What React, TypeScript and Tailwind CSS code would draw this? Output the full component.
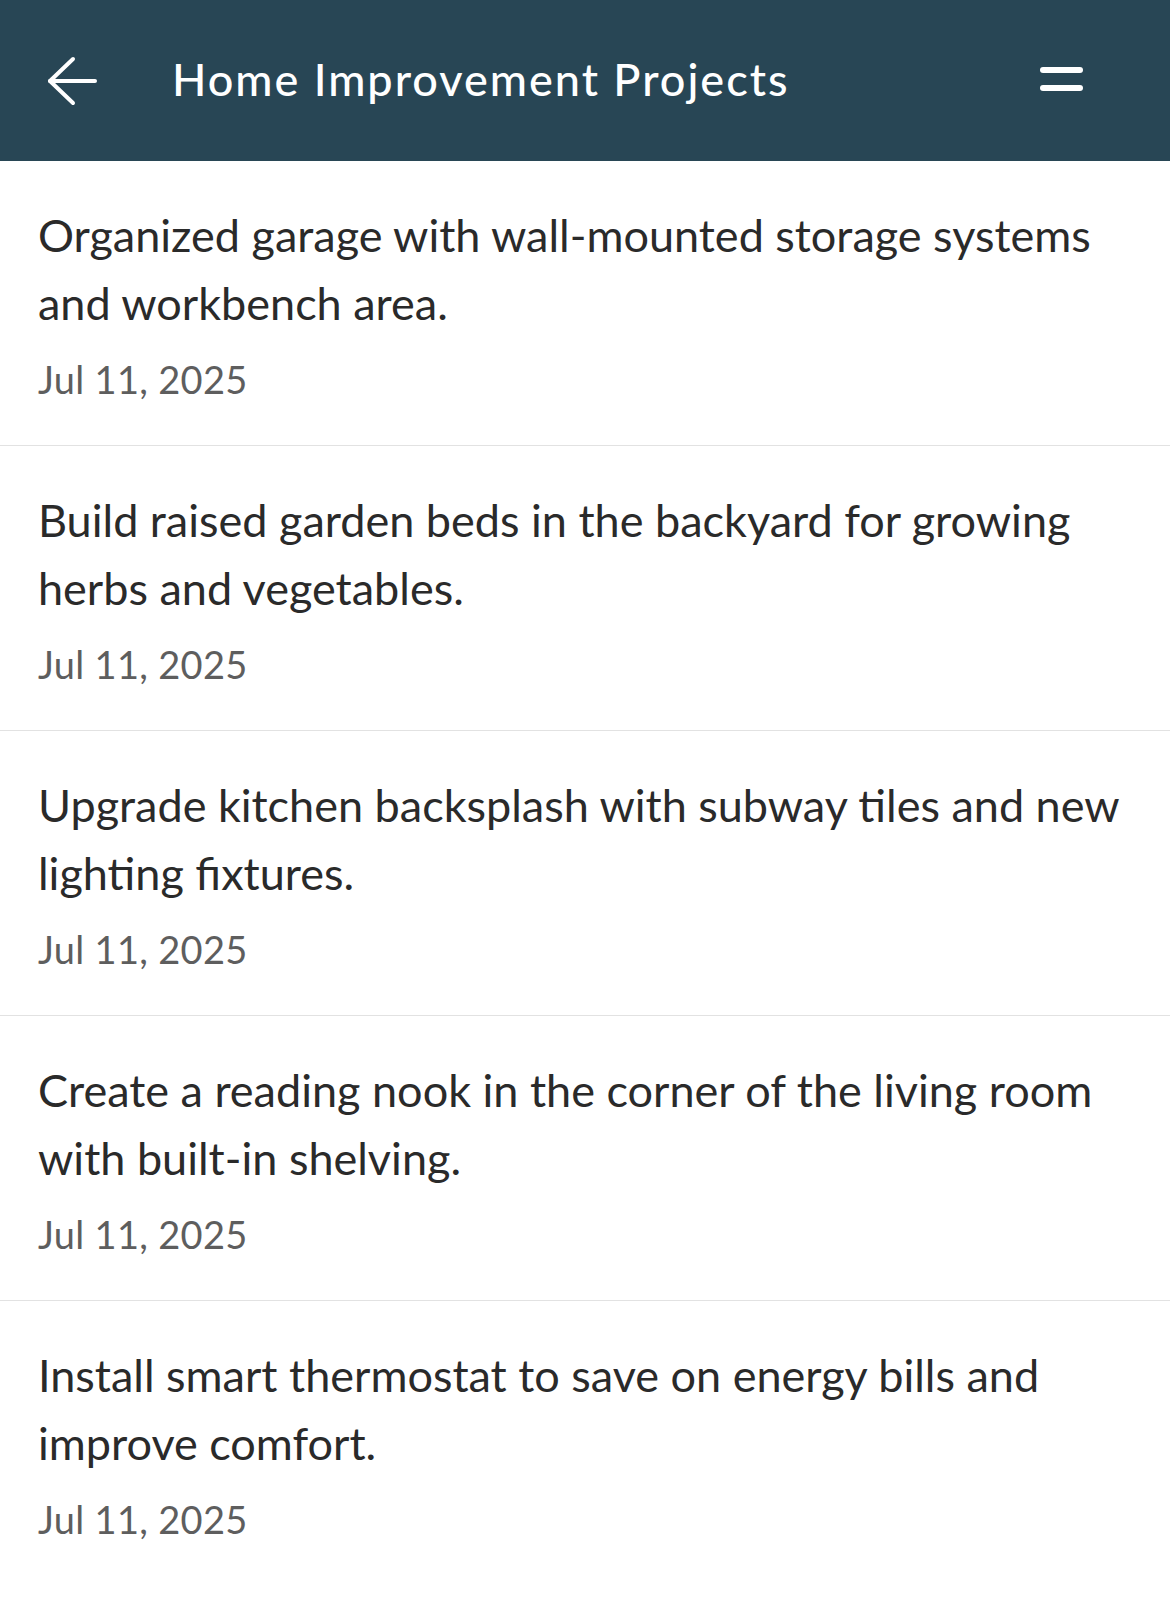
const PROJECTS = [
  { id: 1, text: "Organized garage with wall-mounted storage systems and workbench area.", date: "Jul 11, 2025" },
  { id: 2, text: "Build raised garden beds in the backyard for growing herbs and vegetables.", date: "Jul 11, 2025" },
  { id: 3, text: "Upgrade kitchen backsplash with subway tiles and new lighting fixtures.", date: "Jul 11, 2025" },
  { id: 4, text: "Create a reading nook in the corner of the living room with built-in shelving.", date: "Jul 11, 2025" },
  { id: 5, text: "Install smart thermostat to save on energy bills and improve comfort.", date: "Jul 11, 2025" },
];

function BackArrow() {
  return (
    <svg width="50" height="50" viewBox="0 0 50 50" fill="none" stroke="white" strokeWidth="4" strokeLinecap="round" strokeLinejoin="round">
      <path d="M3 25H48" />
      <path d="M26 3L3 25L26 47" />
    </svg>
  );
}

export default function App() {
  return (
    <div className="min-h-[1600px] bg-white font-['Lato',sans-serif]">
      {/* Header */}
      <header className="h-[161px] bg-[#284655] flex items-center pl-[47px] pr-[87px]">
        <button className="shrink-0 flex items-center">
          <BackArrow />
        </button>
        <h1 className="ml-[75px] flex-1 text-white text-[45px] font-medium tracking-[2px] leading-none -mt-[2px]">
          Home Improvement Projects
        </h1>
        <button className="flex flex-col gap-[12px] w-[43px] -mt-[4px]">
          <span className="block h-[6px] w-full rounded-full bg-white" />
          <span className="block h-[6px] w-full rounded-full bg-white" />
        </button>
      </header>

      {/* List */}
      <ul>
        {PROJECTS.map(p => (
          <li key={p.id} className="border-b border-[#e2e2e2] last:border-b-0 px-[38px] pt-[40px] pb-[42px]">
            <p className="text-[45px] leading-[68px] text-[#2a2a2a]">{p.text}</p>
            <p className="mt-[18px] text-[38px] leading-[48px] text-[#5e5e5e] tracking-[0.3px]">{p.date}</p>
          </li>
        ))}
      </ul>
    </div>
  );
}
